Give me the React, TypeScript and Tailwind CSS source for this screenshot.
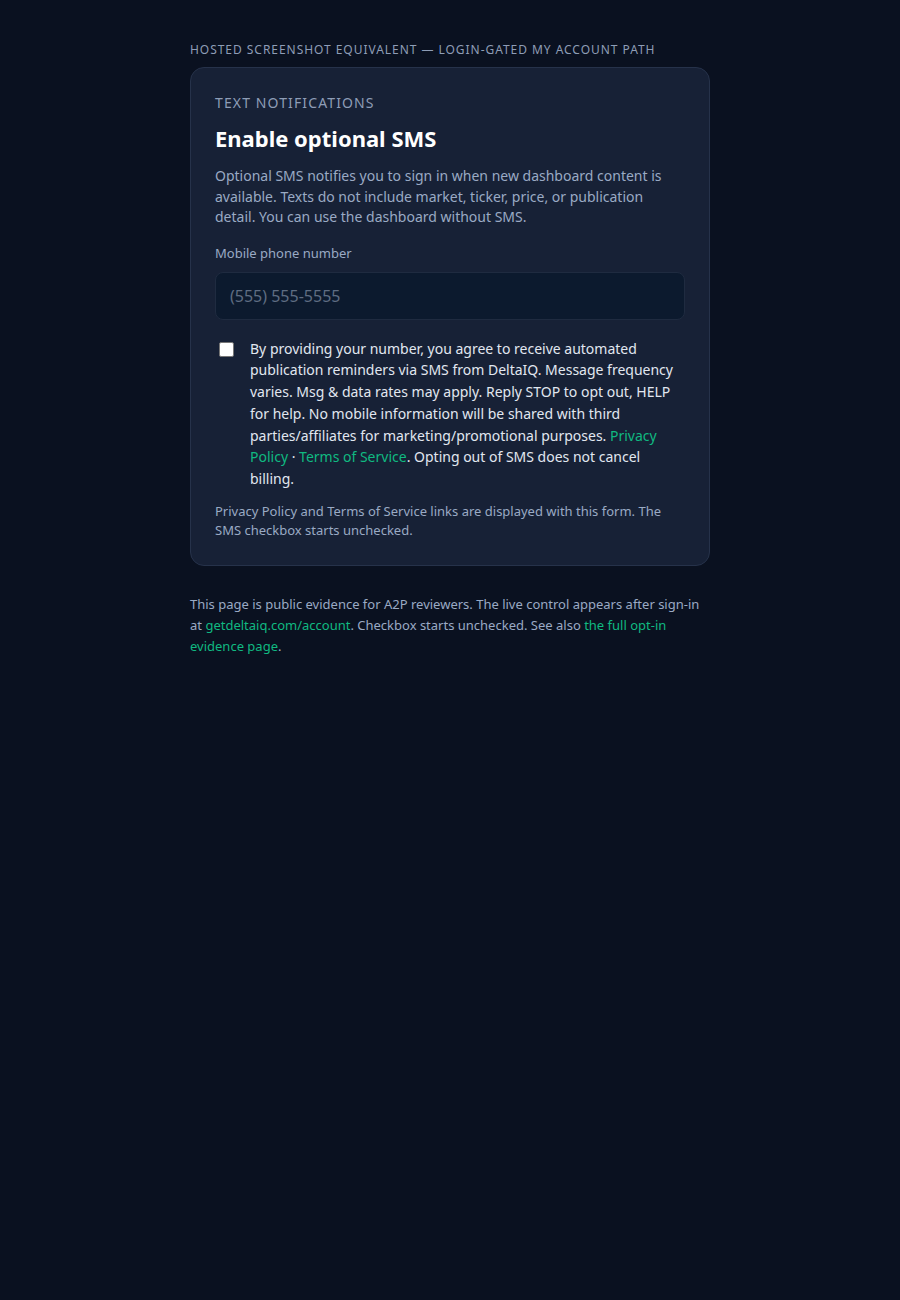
export default function App() {
  return (
    <div
      className="min-h-[1300px] bg-[#0a1120] text-slate-200"
      style={{ fontFamily: '"Noto Sans", "Open Sans", sans-serif' }}
    >
      <div className="mx-auto w-[520px] pt-[41px]">
        <p className="m-0 text-[12px] leading-[18px] uppercase tracking-[0.08em] text-[#8e9db6]">
          Hosted screenshot equivalent — login-gated My Account path
        </p>

        <section className="mt-2 rounded-[14px] border border-[#26324a] bg-[#172136] px-6 pt-6 pb-[25px]">
          <p className="m-0 text-[14px] leading-[22px] uppercase tracking-[0.08em] text-[#8e9db6]">
            Text notifications
          </p>
          <h2 className="mt-[9px] mb-0 text-[22px] font-bold leading-[30px] text-white">
            Enable optional SMS
          </h2>
          <p className="mt-[13px] mb-0 text-[14px] leading-[20.5px] text-[#9aaac4]">
            Optional SMS notifies you to sign in when new dashboard content is
            available. Texts do not include market, ticker, price, or publication
            detail. You can use the dashboard without SMS.
          </p>

          <label className="mt-[16px] block text-[13px] leading-[18px] text-[#9aaac4]">
            Mobile phone number
          </label>
          <input
            type="tel"
            placeholder="(555) 555-5555"
            className="mt-[10px] block h-[48px] w-full rounded-lg border border-[#1f2b40] bg-[#0c1a2e] px-[14px] text-[16px] text-slate-200 outline-none placeholder:text-[#5f6d82]"
          />

          <div className="mt-[18px] flex gap-[16px]">
            <div className="shrink-0 pl-[4px] pt-[4px]">
              <div className="h-[15px] w-[15px] rounded-[2px] border border-[#767676] bg-white" />
            </div>
            <p className="m-0 text-[14px] leading-[21.8px] text-[#e1e7f0]">
              By providing your number, you agree to receive automated publication
              reminders via SMS from DeltaIQ. Message frequency varies. Msg &amp; data
              rates may apply. Reply STOP to opt out, HELP for help. No mobile
              information will be shared with third parties/affiliates for
              marketing/promotional purposes.{" "}
              <a href="#" className="text-[#10b981] no-underline">
                Privacy Policy
              </a>{" "}
              ·{" "}
              <a href="#" className="text-[#10b981] no-underline">
                Terms of Service
              </a>
              . Opting out of SMS does not cancel billing.
            </p>
          </div>

          <p className="mt-[12px] mb-0 text-[13px] leading-[19px] text-[#9aaac4]">
            Privacy Policy and Terms of Service links are displayed with this form.
            The SMS checkbox starts unchecked.
          </p>
        </section>

        <p className="mt-7 mb-0 text-[13px] leading-[21px] text-[#9aaac4]">
          This page is public evidence for A2P reviewers. The live control appears
          after sign-in at{" "}
          <a href="#" className="text-[#10b981] no-underline">
            getdeltaiq.com/account
          </a>
          . Checkbox starts unchecked. See also{" "}
          <a href="#" className="text-[#10b981] no-underline">
            the full opt-in evidence page
          </a>
          .
        </p>
      </div>
    </div>
  );
}
